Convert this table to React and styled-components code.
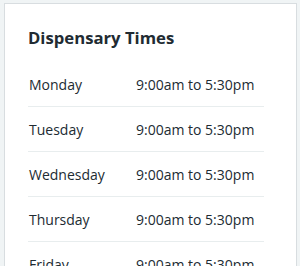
import React from "react";
import styled, { createGlobalStyle } from "styled-components";

const Global = createGlobalStyle`
  html, body { margin: 0; padding: 0; background: #f0f4f5; }
  body { font-family: "Open Sans", "Noto Sans", sans-serif; color: #212b32; }
`;

const Page = styled.div`
  padding: 3px 3px 0 4px;
  height: 266px;
  box-sizing: border-box;
  overflow: hidden;
`;

const Card = styled.section`
  background: #ffffff;
  border: 1px solid #d8dde0;
  border-bottom: none;
  padding: 20px 32px 0 23px;
  height: 300px;
`;

const Heading = styled.h2`
  margin: 0 0 10px 0;
  font-size: 16.7px;
  font-weight: 700;
  line-height: 28px;
  color: #212b32;
`;

const Table = styled.div`
  display: flex;
  flex-direction: column;
`;

const Row = styled.div`
  display: grid;
  grid-template-columns: 107px 1fr;
  align-items: center;
  height: 44px;
  border-bottom: 1px solid #e8edee;
  font-size: 14px;
  color: #212b32;
`;

const Cell = styled.span`
  padding-left: 1px;
`;

const days = ["Monday", "Tuesday", "Wednesday", "Thursday", "Friday"];

export default function App() {
  return (
    <>
      <Global />
      <Page>
        <Card>
          <Heading>Dispensary Times</Heading>
          <Table>
            {days.map((d) => (
              <Row key={d}>
                <Cell>{d}</Cell>
                <Cell>9:00am to 5:30pm</Cell>
              </Row>
            ))}
          </Table>
        </Card>
      </Page>
    </>
  );
}
